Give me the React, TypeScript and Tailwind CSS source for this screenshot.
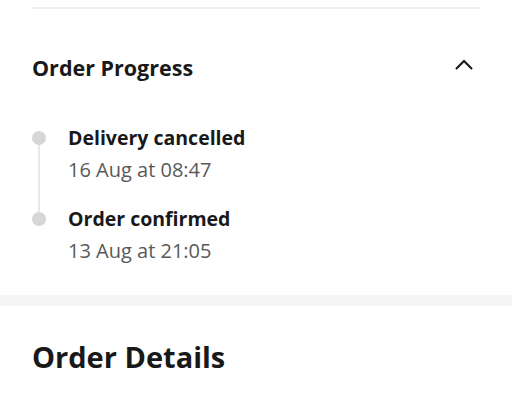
import React from "react";

const font = { fontFamily: "'Open Sans', 'Noto Sans', sans-serif" };

export default function App() {
  return (
    <div className="w-[512px] h-[400px] bg-white overflow-hidden" style={font}>
      <div className="px-8">
        <div className="h-[7px]" />
        <div className="h-[2px] bg-[#eeeeee]" />
        <div className="flex items-center justify-between pt-[45px]">
          <h2 className="text-[21.5px] leading-[28px] font-bold text-[#191919]">Order Progress</h2>
          <svg width="20" height="12" viewBox="0 0 20 12" className="mr-[6px] mb-[6px]">
            <path d="M2 10 L10 2 L18 10" fill="none" stroke="#191919" strokeWidth="2.2" />
          </svg>
        </div>
        <div className="pt-[42px] relative">
          <div className="absolute left-[6px] top-[55px] w-[2px] h-[80px] bg-[#e8e8e8]" />
          <div className="flex gap-[22px]">
            <div className="relative w-[14px] h-[14px] rounded-full bg-[#d6d6d6] mt-[7px] shrink-0" />
            <div>
              <div className="text-[19.5px] leading-[28px] font-bold text-[#191919]">Delivery cancelled</div>
              <div className="text-[20px] leading-[28px] text-[#595959] mt-[4px]">16 Aug at 08:47</div>
            </div>
          </div>
          <div className="flex gap-[22px] mt-[21px]">
            <div className="relative w-[14px] h-[14px] rounded-full bg-[#d6d6d6] mt-[7px] shrink-0" />
            <div>
              <div className="text-[19.5px] leading-[28px] font-bold text-[#191919]">Order confirmed</div>
              <div className="text-[20px] leading-[28px] text-[#595959] mt-[4px]">13 Aug at 21:05</div>
            </div>
          </div>
        </div>
      </div>
      <div className="h-[11px] bg-[#f5f5f5] mt-[30px]" />
      <div className="px-8 pt-[33px]">
        <h1 className="text-[29px] leading-[36px] font-bold text-[#191919]">Order Details</h1>
      </div>
    </div>
  );
}
